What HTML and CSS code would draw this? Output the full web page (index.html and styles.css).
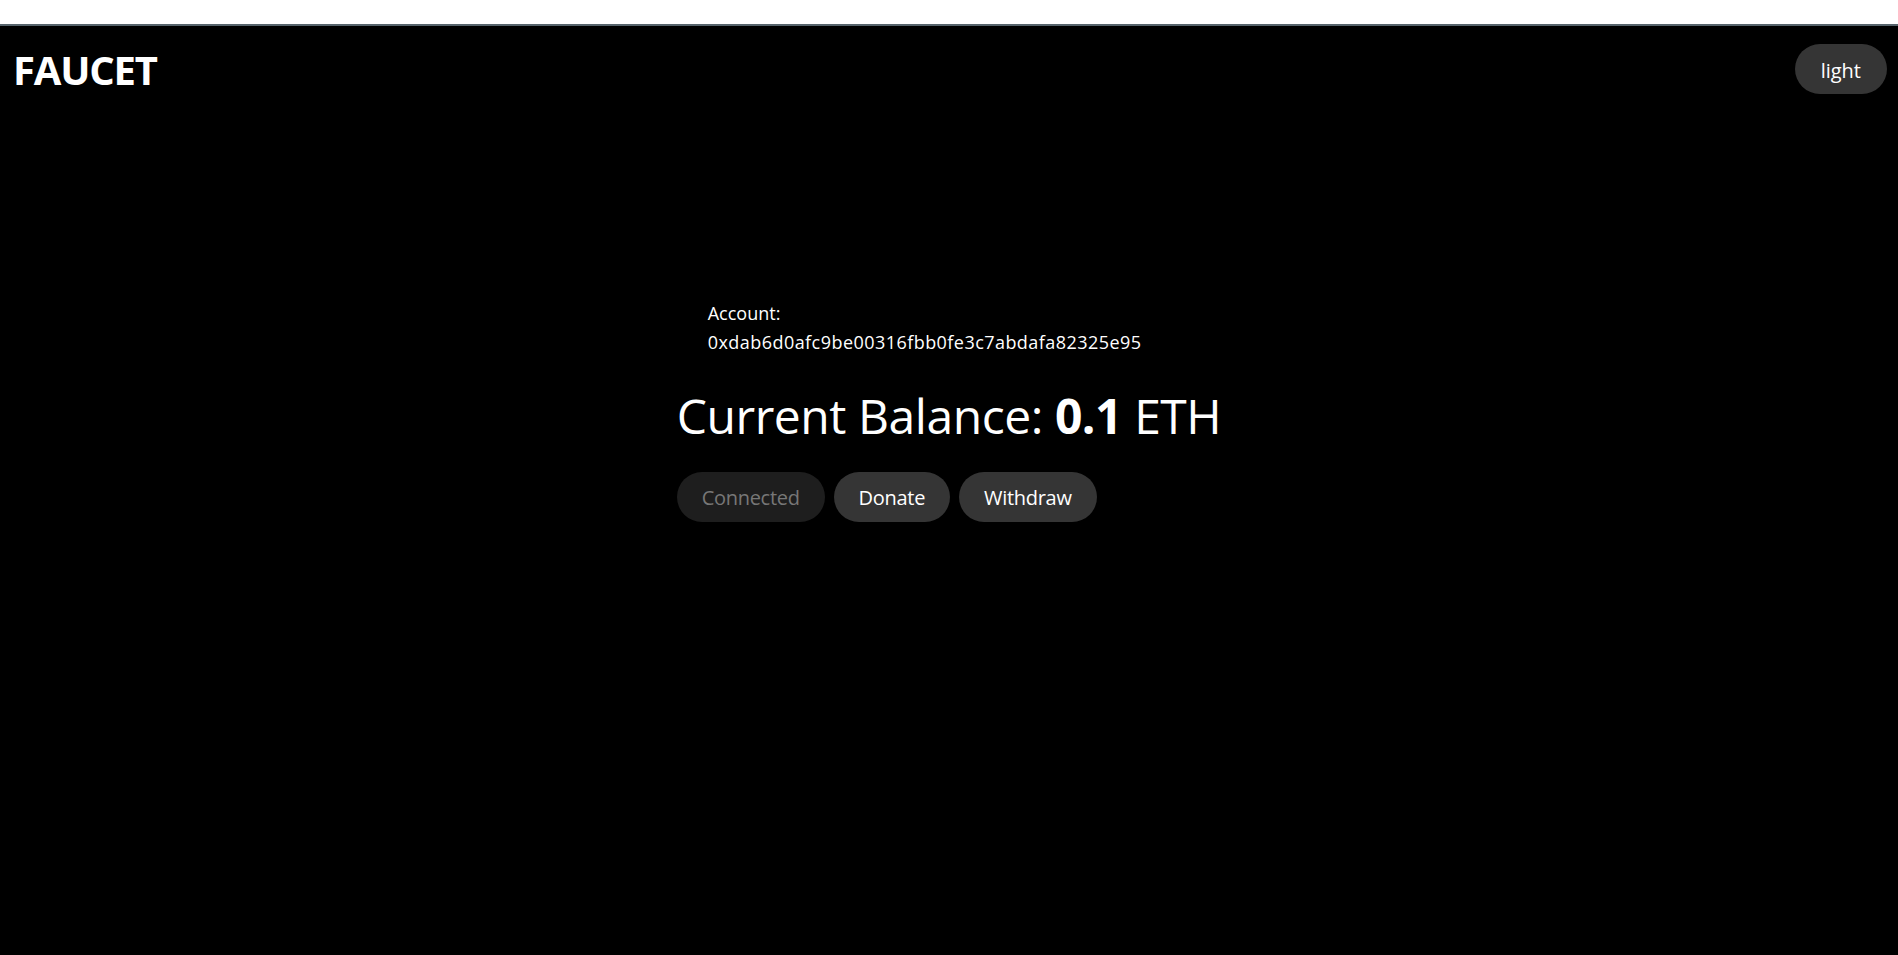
FILE: index.html
```html
<!DOCTYPE html>
<html lang="en">
<head>
<meta charset="utf-8">
<title>Faucet</title>
<link rel="stylesheet" href="styles.css">
</head>
<body>
<div class="topbar"></div>
<div class="app">
  <header class="header">
    <h1 class="logo">FAUCET</h1>
    <button class="btn theme-btn">light</button>
  </header>
  <main class="main">
    <section class="wallet">
      <div class="account">
        <div class="account-label">Account:</div>
        <div class="account-address">0xdab6d0afc9be00316fbb0fe3c7abdafa82325e95</div>
      </div>
      <h2 class="balance">Current Balance: <strong>0.1</strong> ETH</h2>
      <div class="actions">
        <button class="btn btn-connected" disabled>Connected</button>
        <button class="btn">Donate</button>
        <button class="btn">Withdraw</button>
      </div>
    </section>
  </main>
</div>
</body>
</html>
```
FILE: styles.css
```css
html, body {
  margin: 0;
  padding: 0;
  height: 100%;
}
body {
  background: #000;
  color: #fff;
  font-family: "Open Sans", "Noto Sans", sans-serif;
  display: flex;
  flex-direction: column;
}
.topbar {
  height: 24px;
  background: #fff;
  border-bottom: 2px solid #56636b;
  flex: none;
}
.app {
  flex: 1;
  background: #000;
}
.header {
  display: flex;
  justify-content: space-between;
  align-items: center;
  padding: 18px 11px 0 13px;
}
.logo {
  margin: 0;
  font-size: 40px;
  line-height: 50px;
  font-weight: 700;
  letter-spacing: -1.2px;
  position: relative;
  top: 1px;
}
.btn {
  font-family: inherit;
  font-size: 20px;
  line-height: 26px;
  padding: 13px 25px 11px;
  border: none;
  border-radius: 25px;
  background: #353535;
  color: #fff;
  letter-spacing: -0.3px;
  cursor: pointer;
}
.theme-btn {
  padding: 14px 26px 10px;
  letter-spacing: 0;
}
.btn-connected {
  background: #1e1e1e;
  color: #777;
  cursor: default;
}
.main {
  display: flex;
  justify-content: center;
  padding-top: 205px;
}
.wallet {
  display: flex;
  flex-direction: column;
}
.account {
  padding-left: 31px;
  font-size: 18px;
  line-height: 29px;
}
.account-address {
  letter-spacing: 0.45px;
}
.balance {
  margin: 30px 0 27px;
  font-size: 48px;
  line-height: 58px;
  font-weight: 400;
  letter-spacing: -0.45px;
}
.balance strong {
  font-weight: 700;
}
.actions {
  display: flex;
  gap: 9px;
}
```
